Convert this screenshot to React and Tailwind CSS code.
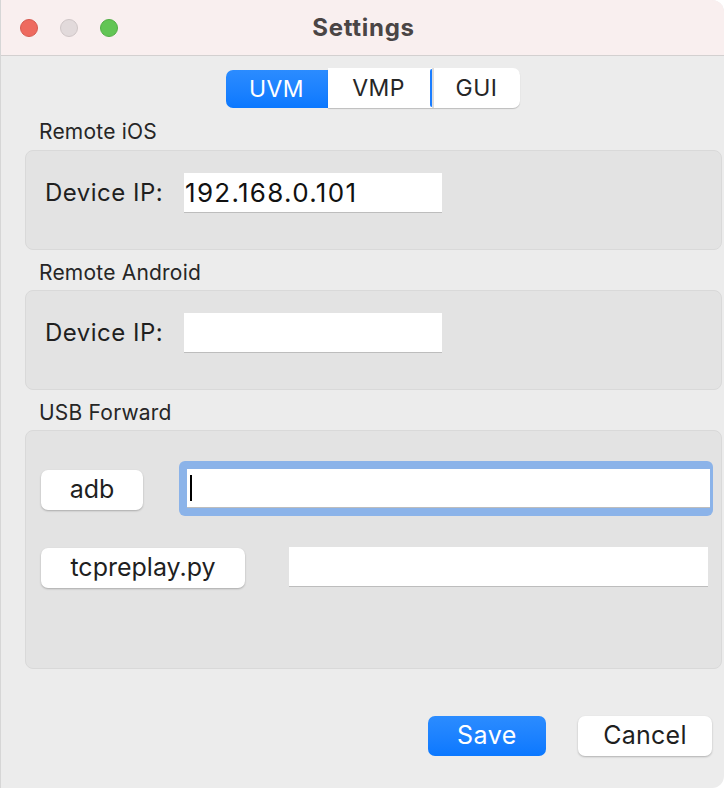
export default function App() {
  const font = { fontFamily: "Inter, 'Liberation Sans', sans-serif" };

  return (
    <div className="w-[724px] h-[788px] bg-white" style={font}>
      <div className="w-[724px] h-[788px] rounded-tr-[12px] rounded-br-[12px] overflow-hidden bg-[#ececec] flex flex-col border-l border-[#d6d6d6]">
        {/* Title bar */}
        <div className="h-[56px] shrink-0 bg-[#f9efef] border-b border-[#d3d0d0] flex items-center relative">
          <div className="flex gap-[22px] pl-[19px]">
            <span className="w-[18px] h-[18px] rounded-full bg-[#ee6a5f] border border-[#d65a50]" />
            <span className="w-[18px] h-[18px] rounded-full bg-[#e2dadb] border border-[#cfc6c7]" />
            <span className="w-[18px] h-[18px] rounded-full bg-[#62c554] border border-[#52ae45]" />
          </div>
          <div className="absolute inset-0 flex items-center justify-center pl-[2px] text-[24px] tracking-[0.03em] font-bold text-[#4a4545]">
            Settings
          </div>
        </div>

        {/* Segmented control */}
        <div className="flex justify-center pt-[12px] pl-[20px]">
          <div className="flex items-start">
            <div className="w-[102px] h-[38px] mt-[2px] rounded-l-[7px] bg-gradient-to-b from-[#2b8cff] to-[#0a78ff] text-white text-[23px] tracking-[0.02em] flex items-center justify-center">
              UVM
            </div>
            <div className="flex h-[40px] bg-white rounded-r-[7px] shadow-[0_1px_1px_rgba(0,0,0,0.2)]">
              <div className="w-[102px] flex items-center justify-center text-[23px] tracking-[0.02em] text-[#262626]">VMP</div>
              <div className="w-[2px] my-[1px] bg-[#1a7dff] rounded-l" />
              <div className="w-[2px] bg-[#dcdcdc]" />
              <div className="w-[86px] flex items-center justify-center text-[23px] tracking-[0.02em] text-[#262626]">GUI</div>
            </div>
          </div>
        </div>

        <div className="pl-[24px] pr-[2px]">
          {/* Remote iOS */}
          <div className="pl-[14px] pt-[8px] h-[42px] text-[21px] tracking-[0.01em] text-[#262626]">Remote iOS</div>
          <div className="h-[100px] rounded-[8px] bg-[#e3e3e3] border border-[#d9d9d9] flex items-start pt-[22px] pl-[19px]">
            <span className="text-[24px] tracking-[0.02em] text-[#1f1f1f] w-[139px] h-[40px] flex items-center">Device IP:</span>
            <div className="w-[258px] h-[40px] bg-white border-b border-[#bdbdbd] flex items-center pl-[1px] text-[26px] tracking-[0.05em] text-[#111]">
              192.168.0.101
            </div>
          </div>

          {/* Remote Android */}
          <div className="pl-[14px] pt-[7px] h-[40px] text-[21px] tracking-[0.01em] text-[#262626]">Remote Android</div>
          <div className="h-[100px] rounded-[8px] bg-[#e3e3e3] border border-[#d9d9d9] flex items-start pt-[22px] pl-[19px]">
            <span className="text-[24px] tracking-[0.02em] text-[#1f1f1f] w-[139px] h-[40px] flex items-center">Device IP:</span>
            <div className="w-[258px] h-[40px] bg-white border-b border-[#bdbdbd]" />
          </div>

          {/* USB Forward */}
          <div className="pl-[14px] pt-[7px] h-[40px] text-[21px] tracking-[0.01em] text-[#262626]">USB Forward</div>
          <div className="h-[239px] rounded-[8px] bg-[#e3e3e3] border border-[#d9d9d9] pl-[15px] pr-[8px] pt-[30px] flex flex-col">
            <div className="flex items-center">
              <div className="w-[102px] h-[40px] mt-[3px] bg-white rounded-[7px] shadow-[0_1px_2px_rgba(0,0,0,0.25)] flex items-center justify-center text-[25px] text-[#1f1f1f]">
                adb
              </div>
              <div className="ml-[36px] flex-1 h-[55px] rounded-[6px] bg-[#8bb3e9] p-[8px] pr-[3px]">
                <div className="h-full bg-white border-b border-[#bdbdbd] flex items-center pl-[3px]">
                  <span className="w-[2px] h-[26px] bg-black" />
                </div>
              </div>
            </div>
            <div className="flex items-start mt-[31px]">
              <div className="w-[204px] h-[40px] mt-[1px] bg-white rounded-[7px] shadow-[0_1px_2px_rgba(0,0,0,0.25)] flex items-center justify-center text-[25px] text-[#1f1f1f]">
                tcpreplay.py
              </div>
              <div className="ml-[44px] w-[419px] h-[40px] bg-white border-b border-[#bdbdbd]" />
            </div>
          </div>
        </div>

        {/* Buttons */}
        <div className="flex justify-end gap-[32px] pr-[12px] pt-[47px]">
          <div className="w-[118px] h-[40px] rounded-[7px] bg-gradient-to-b from-[#2b8cff] to-[#0a78ff] text-white text-[25px] tracking-[0.02em] flex items-center justify-center">
            Save
          </div>
          <div className="w-[134px] h-[40px] rounded-[7px] bg-white shadow-[0_1px_2px_rgba(0,0,0,0.25)] text-[25px] tracking-[0.01em] text-[#1f1f1f] flex items-center justify-center">
            Cancel
          </div>
        </div>
      </div>
    </div>
  );
}
